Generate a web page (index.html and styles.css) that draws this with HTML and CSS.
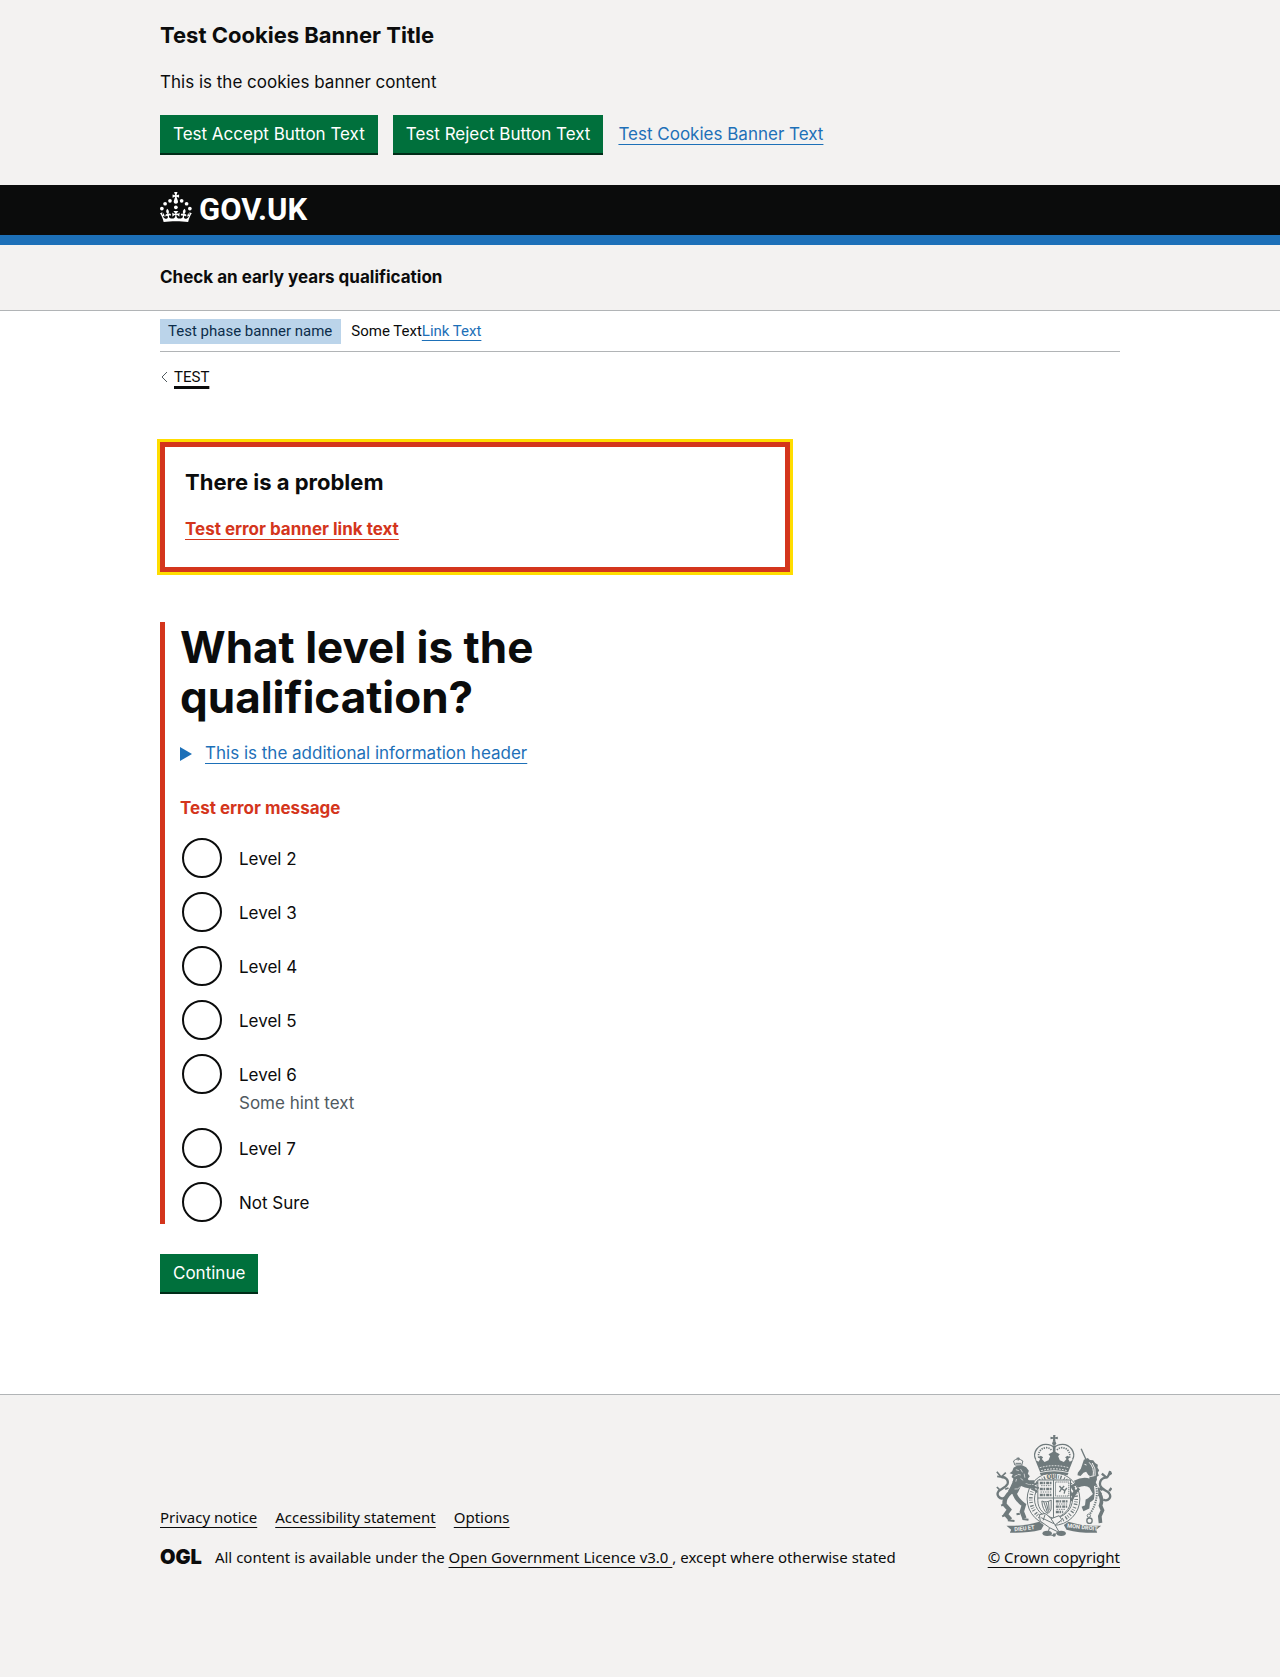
FILE: index.html
```html
<!DOCTYPE html>
<html lang="en">
<head>
<meta charset="utf-8">
<meta name="viewport" content="width=device-width, initial-scale=1">
<title>What level is the qualification?</title>
<link rel="stylesheet" href="styles.css">
</head>
<body>
<section class="cookie-banner" aria-label="Cookies">
  <div class="container">
    <h2 class="heading-m">Test Cookies Banner Title</h2>
    <p class="body">This is the cookies banner content</p>
    <div class="button-group">
      <button class="button" type="button">Test Accept Button Text</button>
      <button class="button" type="button">Test Reject Button Text</button>
      <a class="link" href="#cookies">Test Cookies Banner Text</a>
    </div>
  </div>
</section>

<header class="header">
  <div class="container">
    <a class="header-logo" href="#home">
      <svg class="crown" viewBox="0 0 64 60" fill="currentColor" aria-hidden="true">
        <circle cx="20" cy="17.6" r="3.7"/><circle cx="10.2" cy="23.5" r="3.7"/><circle cx="3.7" cy="33.2" r="3.7"/><circle cx="31.7" cy="30.6" r="3.7"/><circle cx="43.3" cy="17.6" r="3.7"/><circle cx="53.2" cy="23.5" r="3.7"/><circle cx="59.7" cy="33.2" r="3.7"/>
        <path d="M33.1,9.8c.2-.1.3-.3.5-.5l4.6,2.4v-6.8l-4.6,1.5c-.1-.2-.3-.3-.5-.5l1.9-5.9h-6.7l1.9,5.9c-.2.1-.3.3-.5.5l-4.6-1.5v6.8l4.6-2.4c.1.2.3.3.5.5l-2.6,8c-.9,2.8,1.2,5.7,4.1,5.7h0c3,0,5.1-2.9,4.1-5.7l-2.6-8ZM37,37.9s-3.4,3.8-4.1,6.1c2.2,0,4.2-.5,6.4-2.8l-.7,8.5c-2-2.8-4.4-4.1-5.7-3.8.1,3.1.5,6.7,5.8,7.2,3.7.3,6.7-1.5,7-3.8.4-2.6-2-4.3-3.7-1.6-1.4-4.5,2.4-6.1,4.9-3.2-1.9-4.5-1.8-7.7,2.4-10.9,3,4,2.6,7.3-1.2,11.1,2.4-1.3,6.2,0,4,4.6-1.2-2.8-3.7-2.2-4.2.2-.3,1.7.7,3.7,3,4.2,1.9.3,4.7-.9,7-5.9-1.3,0-2.4.7-3.9,1.7l2.4-8c.6,2.3,1.4,3.7,2.2,4.5.6-1.6.5-2.8,0-5.3l5,1.8c-2.6,3.6-5.2,8.7-7.3,17.5-7.4-1.1-15.7-1.7-24.5-1.7h0c-8.8,0-17.1.6-24.5,1.7-2.1-8.9-4.7-13.9-7.3-17.5l5-1.8c-.5,2.5-.6,3.7,0,5.3.8-.8,1.6-2.3,2.2-4.5l2.4,8c-1.5-1-2.6-1.7-3.9-1.7,2.3,5,5.2,6.2,7,5.9,2.3-.4,3.3-2.4,3-4.2-.5-2.4-3-3.1-4.2-.2-2.2-4.6,1.6-6,4-4.6-3.7-3.7-4.2-7.1-1.2-11.1,4.2,3.2,4.3,6.4,2.4,10.9,2.5-2.8,6.3-1.3,4.9,3.2-1.8-2.7-4.1-1-3.7,1.6.3,2.3,3.3,4.1,7,3.8,5.4-.5,5.7-4.2,5.8-7.2-1.3-.2-3.7,1-5.7,3.8l-.7-8.5c2.2,2.3,4.2,2.7,6.4,2.8-.7-2.3-4.1-6.1-4.1-6.1h10.6,0Z"/>
      </svg>
      <span>GOV.UK</span>
    </a>
  </div>
</header>

<div class="service-nav">
  <div class="container">
    <span class="service-name">Check an early years qualification</span>
  </div>
</div>

<div class="container">
  <div class="phase-banner">
    <strong class="tag">Test phase banner name</strong>
    <span>Some Text<a class="link" href="#feedback">Link Text</a></span>
  </div>
  <nav class="back">
    <svg class="chevron" viewBox="0 0 7 12" fill="none" stroke="currentColor" aria-hidden="true"><path d="M6 1 1 6l5 5"/></svg>
    <a class="back-link" href="#back">TEST</a>
  </nav>

  <main class="main">
    <div class="error-summary" role="alert">
      <h2 class="heading-m">There is a problem</h2>
      <a class="link error-link" href="#level-2">Test error banner link text</a>
    </div>

    <form class="form">
      <div class="form-group">
        <fieldset>
          <legend><h1 class="heading-xl">What level is the qualification?</h1></legend>
          <details class="details">
            <summary><svg class="marker" viewBox="0 0 12 14" fill="currentColor" aria-hidden="true"><path d="M0 0 12 7 0 14z"/></svg><span class="link">This is the additional information header</span></summary>
            <p class="body">This is the additional information body</p>
          </details>
          <p class="error-message">Test error message</p>
          <div class="radios">
            <div class="radio"><input type="radio" name="level" id="level-2"><label for="level-2">Level 2</label></div>
            <div class="radio"><input type="radio" name="level" id="level-3"><label for="level-3">Level 3</label></div>
            <div class="radio"><input type="radio" name="level" id="level-4"><label for="level-4">Level 4</label></div>
            <div class="radio"><input type="radio" name="level" id="level-5"><label for="level-5">Level 5</label></div>
            <div class="radio"><input type="radio" name="level" id="level-6" aria-describedby="level-6-hint"><label for="level-6">Level 6</label><div class="hint" id="level-6-hint">Some hint text</div></div>
            <div class="radio"><input type="radio" name="level" id="level-7"><label for="level-7">Level 7</label></div>
            <div class="radio"><input type="radio" name="level" id="not-sure"><label for="not-sure">Not Sure</label></div>
          </div>
        </fieldset>
      </div>
      <button class="button" type="submit">Continue</button>
    </form>
  </main>
</div>

<footer class="footer">
  <div class="container footer-meta">
    <div class="footer-main">
      <ul class="footer-links">
        <li><a class="footer-link" href="#privacy">Privacy notice</a></li>
        <li><a class="footer-link" href="#accessibility">Accessibility statement</a></li>
        <li><a class="footer-link" href="#options">Options</a></li>
      </ul>
      <div class="licence">
        <strong class="ogl">OGL</strong>
        <span>All content is available under the <a class="footer-link" href="#licence">Open Government Licence v3.0&nbsp;</a>, except where otherwise stated</span>
      </div>
    </div>
    <div class="copyright">
      <svg class="arms" viewBox="50 44 350 306" aria-hidden="true">
        <!-- royal crown -->
        <g class="ink">
          <path d="M224 44h7l-1 7 8-2v8l-8-2 1 9h-8l1-9-8 2v-8l8 2z"/>
          <circle cx="227" cy="69" r="6"/>
          <path d="M223 75h8v42h-8z"/>
          <path d="M170 118l10 6 5-8-5-5 7-5 7 5-4 5 8 9 12-5 5-12-5-6 17-9 17 9-5 6 5 12 12 5 8-9-4-5 7-5 7 5-5 5 5 8 10-6-15 38q-42-12-84 0z"/>
          <path d="M184 158q43-11 86 0l-3 7q-40-9-80 0z"/>
        </g>
        <g class="line">
          <path d="M172 118c-12-22 8-46 30-46 12 0 20 4 25 10 5-6 13-10 25-10 22 0 42 24 30 46" stroke-width="4"/>
          <path d="M181 112c-4-15 6-29 22-30 8 0 14 4 17 9M273 112c4-15-6-29-22-30-8 0-14 4-17 9" stroke-width="5" stroke-dasharray="4 3"/>
        </g>
        <g class="paper-line" stroke-width="3" stroke-dasharray="5 4"><path d="M184 142q43-12 86 0M188 151q40-11 78 0"/></g>
        <!-- garter -->
        <g class="line">
          <circle cx="225" cy="236" r="79" stroke-width="3"/>
          <circle cx="225" cy="236" r="57" stroke-width="3"/>
          <circle cx="225" cy="236" r="68" stroke-width="11" stroke-dasharray="3 5 2 4 4 7"/>
        </g>
        <!-- quartered shield -->
        <path class="paper" d="M178 179h98v62c0 26-20 45-49 54-29-9-49-28-49-54z"/>
        <g class="line">
          <path d="M178 179h98v62c0 26-20 45-49 54-29-9-49-28-49-54zM225 179v115M178 233h98" stroke-width="3"/>
          <path d="M184 188h36M184 206h36M184 224h36M232 243h38M232 259h34M232 275h22" stroke-width="7" stroke-dasharray="9 2 5 3"/>
          <path d="M188 196h30M186 215h34M234 251h34M234 267h28" stroke-width="3" stroke-dasharray="4 3"/>
          <path d="M231 185h40v42h-40z" stroke-width="3" stroke-dasharray="4 2"/>
          <path d="M243 197l6 8 8-8M249 205l-6 10M249 205l10 6-2 9M259 211l6-8" stroke-width="4"/>
          <path d="M190 242c10 4 20 3 28-3v24c0 9-5 14-12 16-9-7-15-19-16-37zM196 245l11 32M203 246l7 28M210 244l2 26" stroke-width="3"/>
        </g>
        <!-- lion -->
        <g class="line">
          <path d="M105 122q12-12 28 0l-3 12h-21z" stroke-width="3"/><path d="M119 111v10M114 114h10M111 129h17" stroke-width="3"/>
          <path d="M124 158q-6 34-24 62" stroke-width="28"/>
          <path d="M122 186q16 14 46 14M130 180l24 6 14 0" stroke-width="12"/>
          <path d="M98 214q-22 18-20 38l14 16-10 14 14 16" stroke-width="13"/>
          <path d="M108 220q8 20 28 34l-6 20 8 20" stroke-width="13"/>
          <path d="M88 300l20 2M132 296l18 2M76 252l-8 4M80 284l-9 4M166 194l12-8M166 200l15 3M164 204l12 12M124 280l-10 2" stroke-width="6"/>
        </g>
        <g class="ink">
          <path d="M105 142l10-6 16-1 12 6 8 10-3 9 6 8-6 7 4 9-10 1-2 8-12-4-12 4-4-8-10-1 4-8-7-6 4-8-10-3 8-6z"/>
          <path d="M84 316c32 2 66-2 98-12l14 10-8 14c-32 8-62 10-94 9l4-9z"/>
        </g>
        <g class="line">
          <path d="M78 232c-14 8-26-8-18-19 7-9 22-10 27-22 4-11-5-22-19-21" stroke-width="7"/>
          <path d="M55 154l13 16-12-2M68 170l14-13M63 208l-8-8M80 207l10-4" stroke-width="5"/>
        </g>
        <g class="paper-line" stroke-width="2"><path d="M112 148l9 3M126 146l6 10M118 162l9 2M137 160l2 12M108 168l9-4M126 174l8 6M114 176l-2 8M108 206q12 2 16-6"/></g>
        <!-- unicorn -->
        <g class="line">
          <path d="M308 85l14 32" stroke-width="4"/>
          <path d="M337 150q14 12 2 40" stroke-width="22"/>
          <path d="M292 192q30-16 50 2l18 32" stroke-width="24"/>
          <path d="M296 190l-16 8 10 16-12 12M302 204l-12 14-12 24" stroke-width="8"/>
          <path d="M352 222q-16 16-24 20l-2 18-14 6" stroke-width="14"/>
          <path d="M362 218q12 20 4 38l6 14-8 18 2 20" stroke-width="11"/>
        </g>
        <g class="ink">
          <path d="M316 118l12-5 6 6 10 1 6 8 8 5-1 9 5 8-4 7 3 9-8 4 2 10-16-2-16-24-8 3-9 10-9-2 1-8 9-12z"/>
          <path d="M368 316c-32 2-66-2-98-12l-14 10 8 14c32 8 60 10 92 9l-3-9z"/>
        </g>
        <g class="line">
          <path d="M374 238c16 7 26-8 18-19-7-9-23-10-27-24-3-13 6-24 18-23 6 0 8-8 12-20M384 172l-14-12M392 163l8-6M372 209l-10-5M392 212l7-9" stroke-width="7"/>
        </g>
        <g class="paper-line"><path d="M352 196c6 30-2 60-18 90" stroke-width="11"/></g>
        <g class="line">
          <path d="M353 196c6 30-2 60-18 84" stroke-width="6" stroke-dasharray="4 3"/>
          <circle cx="333" cy="301" r="8" stroke-width="4"/><circle cx="331" cy="286" r="5" stroke-width="3"/>
        </g>
        <g class="paper-line" stroke-width="3"><path d="M332 126q16 16 12 40M341 128q12 16 9 38M318 132l6 2M322 164q14 8 26 2"/></g>
        <!-- buckle, strap and motto -->
        <path class="paper" d="M182 284l18-4 18 15 24-9 8 12-22 18 12 18-13 14-20-3 5-22-29-22z"/>
        <g class="line" stroke-width="3"><path d="M183 283l18-4 17 16 24-9 8 12-20 16 10 18-14 14-19-4 6-20-28-20zM200 282l-6 18M218 296l12 18M188 292l38 18M213 322l24 12"/></g>
        <g class="ink"><ellipse cx="206" cy="339" rx="14" ry="8"/><ellipse cx="248" cy="339" rx="14" ry="8"/><circle cx="227" cy="344" r="5"/></g>
        <g class="motto"><text transform="rotate(-6 145 320)" x="107" y="329">DIEU ET</text><text transform="rotate(6 308 320)" x="266" y="326">MON DROIT</text></g>
        <text class="garter-text" x="204" y="176">QUI</text>
      </svg>
      <a class="footer-link" href="#copyright">© Crown copyright</a>
    </div>
  </div>
</footer>
</body>
</html>
```
FILE: styles.css
```css
* { box-sizing: border-box; }

html { background: #f3f2f1; }

body {
  margin: 0;
  background: #fff;
  color: #0b0c0c;
  font-family: Inter, "Liberation Sans", sans-serif;
  font-size: 17px;
  line-height: 25px;
}

h1, h2, p, ul { margin: 0; padding: 0; }

.container {
  max-width: 960px;
  margin: 0 auto;
}

.heading-m {
  margin-bottom: 20px;
  font-size: 22px;
  line-height: 30px;
}

.heading-xl {
  font-size: 44px;
  line-height: 50px;
}

.link, .footer-link, .back-link {
  text-decoration: underline;
  text-decoration-thickness: 1px;
  text-underline-offset: 4px;
  text-decoration-skip-ink: none;
}

.link { color: #1d70b8; }

.footer-link, .back-link { color: #0b0c0c; }

.button {
  height: 38px;
  padding: 1px 13px 0;
  border: 0;
  background: #00703c;
  box-shadow: 0 2px 0 #002d18;
  color: #fff;
  font: inherit;
  cursor: pointer;
}

/* Cookie banner */
.cookie-banner {
  padding: 20px 0 32px;
  background: #f3f2f1;
}

.button-group {
  display: flex;
  align-items: center;
  gap: 15px;
  margin-top: 20px;
}

/* Header */
.header {
  background: #0b0c0c;
  border-bottom: 10px solid #1d70b8;
}

.header-logo {
  display: flex;
  align-items: center;
  width: max-content;
  height: 50px;
  gap: 7px;
  color: #fff;
  font-family: Roboto, sans-serif;
  font-size: 31px;
  font-weight: 700;
  line-height: 30px;
  text-decoration: none;
}

.crown {
  width: 32px;
  height: 30px;
  margin-bottom: 6px;
}

.service-nav {
  padding: 20px 0;
  background: #f3f2f1;
  border-bottom: 1px solid #b1b4b6;
}

.service-name { font-weight: 700; }

/* Phase banner and back link */
.phase-banner {
  display: flex;
  align-items: center;
  gap: 10px;
  padding: 8px 0 7px;
  border-bottom: 1px solid #b1b4b6;
  font-family: Roboto, sans-serif;
  font-size: 15px;
}

.tag {
  padding: 0 9px 0 8px;
  background: #bbd4ea;
  color: #0c2d4a;
  font-weight: 400;
}

.back {
  display: flex;
  align-items: center;
  gap: 6px;
  margin: 15px 0;
  padding-left: 1px;
  font-family: Roboto, sans-serif;
  font-size: 15px;
  line-height: 20px;
}

.chevron {
  width: 7px;
  height: 12px;
  color: #505a5f;
}

.back-link { text-decoration-thickness: 3px; }

/* Main content */
.main { padding: 40px 0 102px; }

.error-summary {
  max-width: 630px;
  margin: 0 0 50px;
  padding: 20px;
  padding-bottom: 25px;
  border: 5px solid #d4351c;
  outline: 3px solid #fd0;
}

.error-link {
  color: #d4351c;
  font-weight: 700;
}

.form { max-width: 470px; }

.form-group {
  margin: 0 0 30px;
  padding: 0 0 0 15px;
  border-left: 5px solid #d4351c;
}

fieldset {
  min-width: 0;
  margin: 0;
  padding: 0;
  border: 0;
}

legend { padding: 0; }

.details { margin: 19px 0 30px; }

summary {
  display: flex;
  align-items: center;
  gap: 13px;
  cursor: pointer;
  list-style: none;
}

.marker {
  width: 12px;
  height: 14px;
  color: #1d70b8;
}

.error-message {
  margin-bottom: 15px;
  color: #d4351c;
  font-weight: 700;
}

.radios {
  display: grid;
  gap: 10px;
}

.radio {
  display: grid;
  grid-template-columns: 44px 1fr;
}

.radio input {
  appearance: none;
  width: 40px;
  height: 40px;
  margin: 2px;
  border: 2px solid #0b0c0c;
  border-radius: 50%;
  background: #fff;
}

.radio input:checked { box-shadow: inset 0 0 0 8px #fff, inset 0 0 0 20px #0b0c0c; }

.radio label {
  justify-self: start;
  padding: 11px 15px 8px;
}

.hint {
  grid-column: 2;
  margin-top: -5px;
  padding: 0 15px;
  color: #505a5f;
}

/* Footer */
.footer {
  padding: 40px 0 109px;
  background: #f3f2f1;
  border-top: 1px solid #b1b4b6;
  font-family: "Noto Sans", sans-serif;
  font-size: 15px;
  line-height: 20px;
}

.footer-meta {
  display: flex;
  align-items: flex-end;
  justify-content: space-between;
}

.footer-links {
  display: flex;
  gap: 18px;
  margin-bottom: 20px;
  list-style: none;
}

.licence {
  display: flex;
  align-items: center;
  gap: 13px;
}

.ogl {
  font-family: Inter, sans-serif;
  font-size: 20px;
  font-weight: 900;
}

.copyright {
  display: flex;
  flex-direction: column;
  align-items: center;
  gap: 10px;
}

.arms {
  width: 117px;
  height: 102px;
}

.arms .ink { fill: #6f7a7c; }
.arms .paper { fill: #f3f2f1; }
.arms .line { fill: none; stroke: #6f7a7c; }
.arms .paper-line { fill: none; stroke: #f3f2f1; }

.motto {
  fill: #f3f2f1;
  font-family: Roboto, sans-serif;
  font-size: 17px;
  font-weight: 700;
}

.garter-text {
  fill: #6f7a7c;
  font-family: Roboto, sans-serif;
  font-size: 20px;
  font-weight: 700;
}

@media (max-width: 1000px) {
  .container { margin: 0 20px; }
  .button-group, .footer-meta, .footer-links { flex-wrap: wrap; }
}
```
